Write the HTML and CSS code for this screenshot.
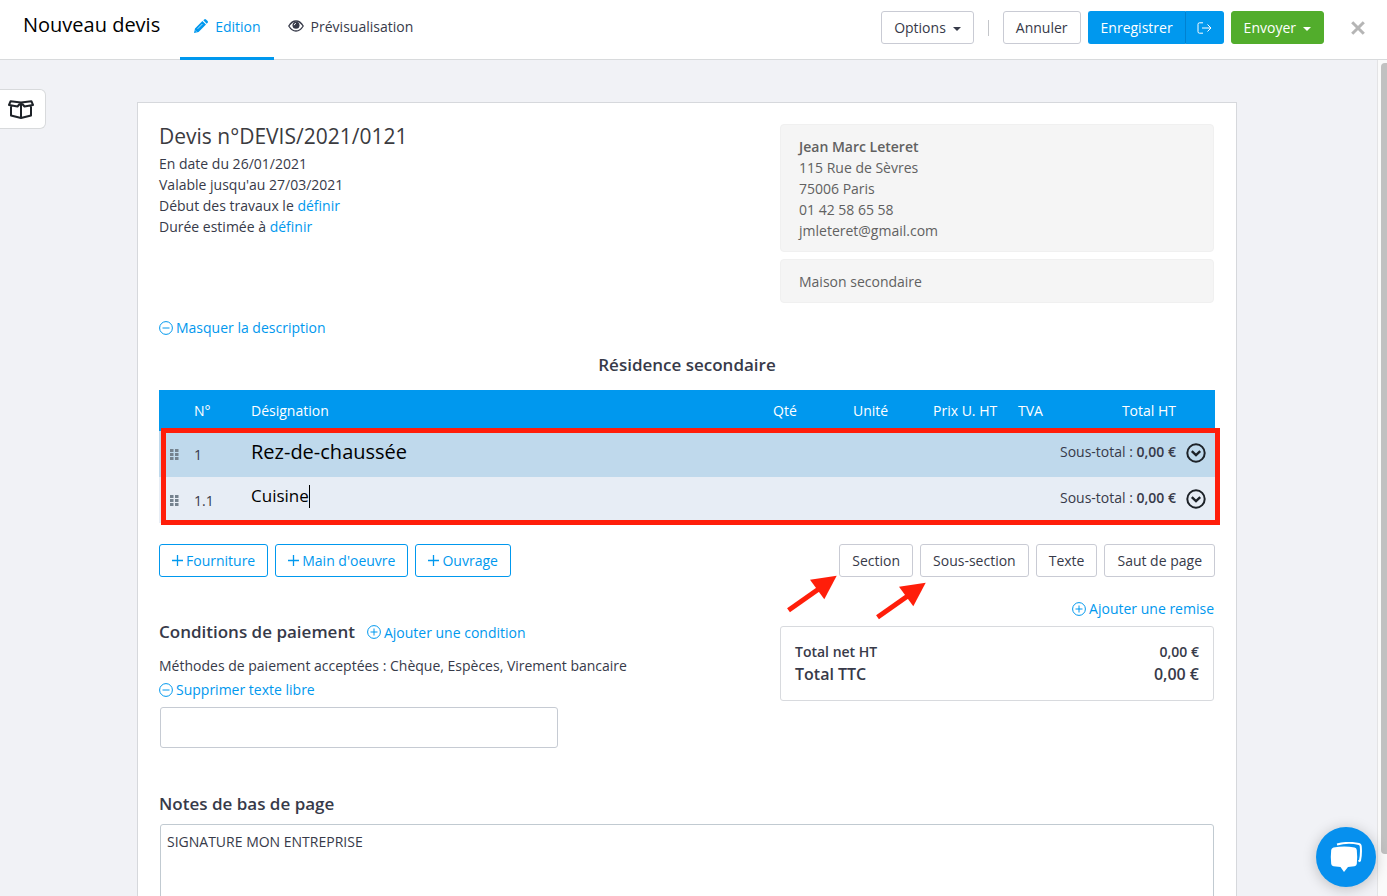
FILE: index.html
```html
<!DOCTYPE html>
<html lang="fr">
<head>
<meta charset="utf-8">
<title>Nouveau devis</title>
<link rel="stylesheet" href="styles.css">
</head>
<body>
<div class="app">
  <header class="topbar">
    <h1 class="topbar-title">Nouveau devis</h1>
    <nav class="tabs">
      <a class="tab tab-active" href="#edition">
        <svg class="tab-icon" width="14" height="14" viewBox="0 0 14 14"><path fill="currentColor" d="M8.400 2 12 5.600 4.600 13 0 14 1 9.400zM9.300 1.200 10.200.4q.9-.8 1.800 0L13.600 2q.8.9 0 1.800l-.9.900z"/><path d="M3.600 9.800 8.400 5M1.400 11.600l1 1" stroke="#fff" stroke-width=".7"/></svg>
        Edition
      </a>
      <a class="tab" href="#apercu">
        <svg class="tab-icon" width="16" height="12" viewBox="0 0 16 12" fill="none" stroke="currentColor"><path d="M.8 6Q3.800 1 8 1t7.200 5Q12.200 11 8 11T.8 6z" stroke-width="1.300"/><circle cx="8" cy="5.300" r="3.500" fill="currentColor" stroke="none"/><path d="M6.200 5.200Q6.300 3.500 8 3.400" stroke="#fff" stroke-width=".9"/></svg>
        Prévisualisation
      </a>
    </nav>
    <div class="actions">
      <button class="btn" type="button">Options <span class="caret"></span></button>
      <span class="divider"></span>
      <button class="btn" type="button">Annuler</button>
      <div class="btn-group">
        <button class="btn btn-blue" type="button">Enregistrer</button>
        <button class="btn btn-blue btn-exit" type="button" aria-label="Enregistrer et quitter">
          <svg width="15" height="12" viewBox="0 0 15 12" fill="none" stroke="currentColor"><path d="M6 .8H2.500Q1 .8 1 2.300v7.400q0 1.500 1.500 1.500H6M5 6h9M10.500 2.500 14 6l-3.500 3.500"/></svg>
        </button>
      </div>
      <button class="btn btn-green" type="button">Envoyer <span class="caret"></span></button>
      <button class="close" type="button" aria-label="Fermer">
        <svg width="14" height="14" viewBox="0 0 14 14"><path d="M1.200 1.200 12.800 12.800M12.800 1.200 1.200 12.800" stroke="#b5b5b5" stroke-width="3"/></svg>
      </button>
    </div>
  </header>

  <div class="workspace">
    <button class="library" type="button" aria-label="Bibliothèque">
      <svg width="26" height="19" viewBox="0 0 26 19" fill="none" stroke="#1d2228" stroke-width="2" stroke-linejoin="round"><path d="M3 6.500V15.500L13 18l10-2.500V6.500M13 2.500V18M13 2.500 2.600 1.200 1 5 9.500 6.500zM13 2.500 23.400 1.200 25 5 16.500 6.500z"/></svg>
    </button>
    <main class="scroll">
      <div class="sheet">
        <section class="intro">
          <div class="intro-info">
            <h2 class="quote-title">Devis n°DEVIS/2021/0121</h2>
            <p>En date du 26/01/2021</p>
            <p>Valable jusqu'au 27/03/2021</p>
            <p>Début des travaux le <a href="#debut">définir</a></p>
            <p>Durée estimée à <a href="#duree">définir</a></p>
          </div>
          <div class="side">
            <address class="box">
              <strong>Jean Marc Leteret</strong>
              <span>115 Rue de Sèvres</span>
              <span>75006 Paris</span>
              <span>01 42 58 65 58</span>
              <span>jmleteret@gmail.com</span>
            </address>
            <div class="box">Maison secondaire</div>
          </div>
        </section>

        <a class="icon-link" href="#description"><svg width="14" height="14" viewBox="0 0 14 14" fill="none" stroke="currentColor"><circle cx="7" cy="7" r="6.400"/><path d="M3.500 7h7"/></svg>Masquer la description</a>
        <h3 class="project">Résidence secondaire</h3>

        <div class="lines">
          <table class="table">
            <colgroup><col class="c-grip"><col class="c-num"><col><col class="c-qty"><col class="c-qty"><col class="c-price"><col class="c-qty"><col class="c-total"><col class="c-act"></colgroup>
            <thead>
              <tr><th></th><th>N°</th><th>Désignation</th><th>Qté</th><th>Unité</th><th>Prix U. HT</th><th>TVA</th><th class="right">Total HT</th><th></th></tr>
            </thead>
            <tbody>
              <tr class="row-section">
                <td class="grip"><svg width="9" height="11" viewBox="0 0 9 11" fill="#75828e"><path d="M0 0h3.500v3H0zM5 0h3.500v3H5zM0 4h3.500v3H0zM5 4h3.500v3H5zM0 8h3.500v3H0zM5 8h3.500v3H5z"/></svg></td>
                <td>1</td>
                <td class="name" colspan="3"><div class="field"><input class="name-input" aria-label="Désignation de la section" value="Rez-de-chaussée"></div></td>
                <td class="subtotal" colspan="3">Sous-total : <strong>0,00 €</strong></td>
                <td class="act"><button class="more" type="button" aria-label="Actions"><svg width="20" height="20" viewBox="0 0 20 20" fill="none" stroke="#1d2228" stroke-width="2"><circle cx="10" cy="10" r="8.700"/><path d="M5.800 8.200 10 12.200l4.200-4" stroke-width="2.400"/></svg></button></td>
              </tr>
              <tr class="row-sub">
                <td class="grip"><svg width="9" height="11" viewBox="0 0 9 11" fill="#75828e"><path d="M0 0h3.500v3H0zM5 0h3.500v3H5zM0 4h3.500v3H0zM5 4h3.500v3H5zM0 8h3.500v3H0zM5 8h3.500v3H5z"/></svg></td>
                <td>1.1</td>
                <td class="name" colspan="3"><div class="field"><input class="name-input" aria-label="Désignation de la sous-section" value="Cuisine"><span class="cursor"></span></div></td>
                <td class="subtotal" colspan="3">Sous-total : <strong>0,00 €</strong></td>
                <td class="act"><button class="more" type="button" aria-label="Actions"><svg width="20" height="20" viewBox="0 0 20 20" fill="none" stroke="#1d2228" stroke-width="2"><circle cx="10" cy="10" r="8.700"/><path d="M5.800 8.200 10 12.200l4.200-4" stroke-width="2.400"/></svg></button></td>
              </tr>
            </tbody>
          </table>
          <div class="highlight"></div>
        </div>

        <div class="toolbar">
          <div class="tools">
            <button class="btn btn-outline" type="button"><svg width="11" height="11" viewBox="0 0 11 11" stroke="currentColor" stroke-width="1.300"><path d="M5.500 0v11M0 5.500h11"/></svg>Fourniture</button>
            <button class="btn btn-outline" type="button"><svg width="11" height="11" viewBox="0 0 11 11" stroke="currentColor" stroke-width="1.300"><path d="M5.500 0v11M0 5.500h11"/></svg>Main d'oeuvre</button>
            <button class="btn btn-outline" type="button"><svg width="11" height="11" viewBox="0 0 11 11" stroke="currentColor" stroke-width="1.300"><path d="M5.500 0v11M0 5.500h11"/></svg>Ouvrage</button>
          </div>
          <div class="tools">
            <div class="pointed">
              <button class="btn" type="button">Section</button>
              <svg class="arrow arrow-section" width="50" height="38" viewBox="0 0 50 38"><path d="M1.500 35.300 31 14.500" stroke="#ff1e0a" stroke-width="5"/><path fill="#ff1e0a" d="M49.700.7 23 4.700 37.300 24.300z"/></svg>
            </div>
            <div class="pointed">
              <button class="btn" type="button">Sous-section</button>
              <svg class="arrow arrow-sub" width="50" height="38" viewBox="0 0 50 38"><path d="M1.500 35.300 31 14.500" stroke="#ff1e0a" stroke-width="5"/><path fill="#ff1e0a" d="M49.700.7 23 4.700 37.300 24.300z"/></svg>
            </div>
            <button class="btn" type="button">Texte</button>
            <button class="btn" type="button">Saut de page</button>
          </div>
        </div>

        <section class="bottom">
          <div class="payment">
            <div class="payment-head">
              <h3 class="heading">Conditions de paiement</h3>
              <a class="icon-link" href="#condition"><svg width="14" height="14" viewBox="0 0 14 14" fill="none" stroke="currentColor"><circle cx="7" cy="7" r="6.400"/><path d="M3.500 7h7M7 3.500v7"/></svg>Ajouter une condition</a>
            </div>
            <p class="methods">Méthodes de paiement acceptées : Chèque, Espèces, Virement bancaire</p>
            <a class="icon-link" href="#texte"><svg width="14" height="14" viewBox="0 0 14 14" fill="none" stroke="currentColor"><circle cx="7" cy="7" r="6.400"/><path d="M3.500 7h7"/></svg>Supprimer texte libre</a>
            <input class="free-text" type="text" aria-label="Texte libre">
          </div>
          <div class="side side-totals">
            <a class="icon-link" href="#remise"><svg width="14" height="14" viewBox="0 0 14 14" fill="none" stroke="currentColor"><circle cx="7" cy="7" r="6.400"/><path d="M3.500 7h7M7 3.500v7"/></svg>Ajouter une remise</a>
            <dl class="totals">
              <div class="total"><dt>Total net HT</dt><dd>0,00 €</dd></div>
              <div class="total total-big"><dt>Total TTC</dt><dd>0,00 €</dd></div>
            </dl>
          </div>
        </section>

        <label class="heading" for="notes">Notes de bas de page</label>
        <textarea class="notes" id="notes">SIGNATURE MON ENTREPRISE</textarea>
      </div>
    </main>
    <div class="track"><div class="thumb"></div></div>
  </div>
</div>
<button class="chat" type="button" aria-label="Discussion">
  <svg width="32" height="31" viewBox="0 0 32 31"><path d="M7 2.500Q18-.5 29 2q1.500.5 1.700 2 .8 7-.7 14.500l-1.500.8" fill="none" stroke="#fff" stroke-width="2"/><path fill="#fff" d="M3.500 5.500q11-1.800 21 0 2 .4 2.300 2.500.8 7 0 14-.3 2-2.300 2.300l-6.500.7-4 5-3.500-5-7-.7q-2-.3-2.300-2.300-.8-7 0-14 .3-2 2.300-2.500z"/></svg>
</button>
</body>
</html>
```
FILE: styles.css
```css
* { box-sizing: border-box; }

body {
  margin: 0;
  font: 14px/21px "Open Sans", "Noto Sans", sans-serif;
  color: #373a49;
}

h1, h2, h3, p, dl, dd { margin: 0; }
button, input, textarea { font: inherit; color: inherit; }
button { cursor: pointer; }
svg { flex: none; }
a { color: #0098ee; text-decoration: none; }
strong { font-weight: 600; }

.app {
  display: flex;
  flex-direction: column;
  height: 100vh;
  overflow: hidden;
}

/* Top bar */
.topbar {
  display: flex;
  align-items: stretch;
  height: 60px;
  flex: none;
  padding: 0 22px 0 23px;
  border-bottom: 1px solid #d8dadc;
  background: #fff;
}
.topbar-title {
  padding-top: 10px;
  font-size: 20px;
  line-height: 30px;
  font-weight: 400;
  color: #000;
}
.tabs { display: flex; margin: 0 0 -1px 20px; }
.tab {
  display: flex;
  align-items: center;
  gap: 7px;
  padding: 0 13px 5px 14px;
  border-bottom: 3px solid transparent;
  color: #373a49;
}
.tab-active { border-color: #0098ee; color: #0098ee; }
.actions {
  display: flex;
  align-items: center;
  gap: 7px;
  margin-left: auto;
  padding-bottom: 4px;
}
.divider { width: 1px; height: 16px; margin: 0 7px; background: #c4c6ca; }

.btn {
  display: flex;
  align-items: center;
  gap: 3px;
  height: 33px;
  padding: 0 12px;
  border: 1px solid #c9cbd4;
  border-radius: 3px;
  background: #fff;
  white-space: nowrap;
}
.btn-blue { border-color: #0098ee; background: #0098ee; color: #fff; font-weight: 500; }
.btn-green { border-color: #52ad2c; background: #52ad2c; color: #fff; font-weight: 500; }
.btn-outline { border-color: #0098ee; color: #0098ee; }
.btn-group { display: flex; }
.btn-group .btn:first-child { border-right: 0; border-radius: 3px 0 0 3px; }
.btn-group .btn-exit { padding: 0 11px; border-left-color: #0081d0; border-radius: 0 3px 3px 0; }
.caret {
  margin: 3px 0 0 4px;
  border: 4px solid transparent;
  border-top-color: currentColor;
  border-bottom: 0;
}
.close { display: flex; margin-left: 20px; padding: 0; border: 0; background: none; }

/* Workspace */
.workspace {
  position: relative;
  display: flex;
  flex: 1;
  min-height: 0;
  background: #f1f2f6;
}
.library {
  position: absolute;
  top: 29px;
  left: 0;
  display: flex;
  align-items: center;
  width: 46px;
  height: 40px;
  padding: 0 8px;
  border: 1px solid #d8dadc;
  border-left: 0;
  border-radius: 0 6px 6px 0;
  background: #fff;
}
.scroll { flex: 1; padding: 42px 3px 0 0; overflow: hidden; }
.track {
  flex: none;
  width: 10px;
  padding: 3px 0 0 3px;
  border-left: 1px solid #e3e3e5;
  background: #fafafa;
}
.thumb { height: 95%; border-radius: 4px 0 0 4px; background: #c1c1c1; }

.sheet {
  max-width: 1100px;
  min-height: 900px;
  margin: 0 auto;
  padding: 21px;
  border: 1px solid #d6d8dc;
  background: #fff;
}

.intro { display: flex; justify-content: space-between; margin-bottom: 14px; }
.quote-title {
  margin-bottom: 5px;
  font-size: 21px;
  line-height: 24px;
  font-weight: 400;
  color: #3b3b3f;
}
.side { display: flex; flex-direction: column; gap: 7px; width: 434px; margin-right: 1px; }
.box {
  display: flex;
  flex-direction: column;
  padding: 11px 18px 10px;
  border: 1px solid #f0f0f0;
  border-radius: 4px;
  background: #f5f5f5;
  color: #616161;
  font-style: normal;
}
.icon-link { display: flex; align-items: center; gap: 3px; }
.project { margin: 15px 0 13px; font-size: 17px; line-height: 24px; font-weight: 600; text-align: center; }

/* Quote lines */
.lines { position: relative; margin-bottom: 21px; }
.table { width: 100%; border-collapse: collapse; table-layout: fixed; }
.c-grip { width: 27px; }
.c-num { width: 57px; }
.c-qty { width: 80px; }
.c-price { width: 85px; }
.c-total { width: 94px; }
.c-act { width: 31px; }
.table th { height: 41px; padding: 0 8px; background: #0098ee; color: #fff; font-weight: 500; text-align: left; }
.table .right { text-align: right; }
.table td { height: 46px; padding: 0 8px; }
.table .grip { padding: 0 0 0 11px; }
.grip svg { display: block; }
.table .subtotal { padding: 0 8px 5px; text-align: right; }
.table .act { padding: 0 0 3px 2px; }
.row-section { background: #bfd9ec; }
.row-sub { background: #e7edf5; }
.field { display: flex; align-items: center; }
.name-input { field-sizing: content; padding: 0; border: 0; outline: 0; background: none; color: #000; }
.table .name { padding: 0 8px 5px; }
.row-section .name-input { font-size: 20px; line-height: 27px; }
.row-sub .name { padding-bottom: 8px; }
.row-sub .name-input { font-size: 17px; line-height: 24px; }
.cursor { width: 1px; height: 23px; background: #000; }
.more { display: flex; padding: 0; border: 0; background: none; }
.highlight {
  position: absolute;
  top: 38px;
  right: -5px;
  bottom: -2px;
  left: 2px;
  border: 5px solid #ff1e0a;
  pointer-events: none;
}

.toolbar, .tools { display: flex; gap: 7px; }
.toolbar { justify-content: space-between; margin-bottom: 21px; }
.pointed { position: relative; }
.arrow { position: absolute; pointer-events: none; }
.arrow-section { top: 31px; left: -52px; }
.arrow-sub { top: 38px; left: -44px; }

/* Payment and totals */
.bottom { display: flex; justify-content: space-between; margin-bottom: 44px; }
.payment { padding-top: 22px; }
.payment-head { display: flex; align-items: center; gap: 12px; margin-bottom: 11px; }
.heading { display: block; font-size: 17px; line-height: 24px; font-weight: 600; }
.methods { margin-bottom: 3px; }
.free-text {
  display: block;
  width: 398px;
  height: 41px;
  margin: 7px 0 0 1px;
  padding: 0 6px;
  border: 1px solid #c6cbd3;
  border-radius: 3px;
}
.side-totals .icon-link { align-self: flex-end; }
.totals { padding: 14px; border: 1px solid #d8dade; border-radius: 3px; }
.total { display: flex; justify-content: space-between; font-weight: 600; }
.total-big { font-size: 16px; line-height: 24px; }
.notes {
  display: block;
  width: calc(100% - 2px);
  height: 120px;
  margin: 8px 1px 0;
  padding: 6px;
  border: 1px solid #c1cad1;
  border-radius: 3px;
  resize: none;
}

.chat {
  position: fixed;
  right: 11px;
  bottom: 9px;
  display: flex;
  align-items: center;
  justify-content: center;
  width: 60px;
  height: 60px;
  border: 0;
  border-radius: 50%;
  background: #0690ee;
  box-shadow: 0 2px 14px rgba(0, 0, 0, .22);
}
```
